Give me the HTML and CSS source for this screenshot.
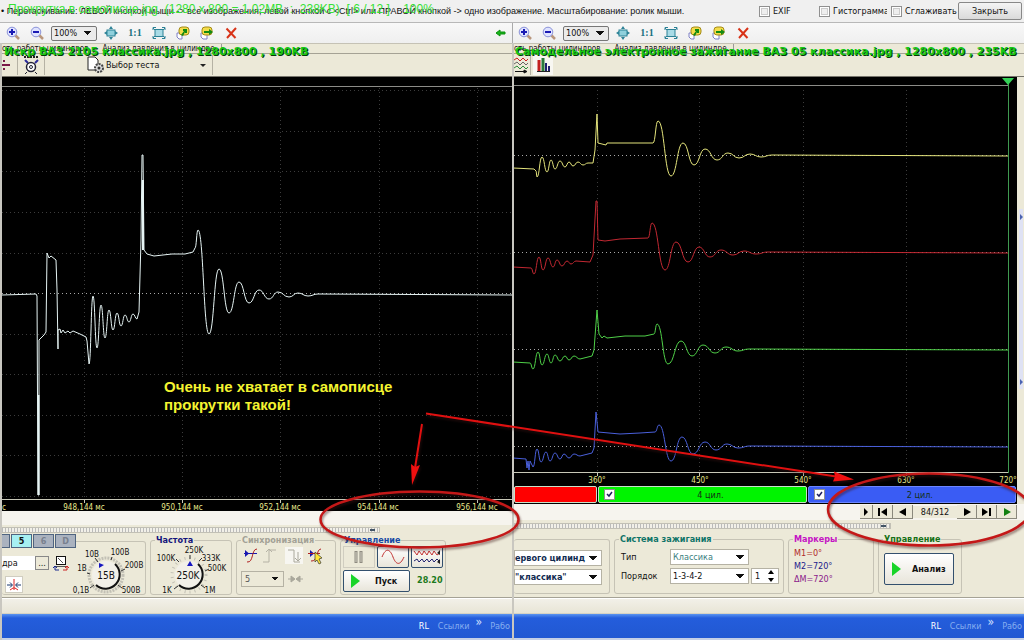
FILE: index.html
```html
<!DOCTYPE html>
<html lang="ru">
<head>
<meta charset="utf-8">
<title>Сравнение изображений</title>
<link rel="stylesheet" href="styles.css">
</head>
<body>
<svg class="defs" width="0" height="0" aria-hidden="true">
  <symbol id="zin" viewBox="0 0 14 14"><path d="M8.5 8.5L13 13" stroke="#b9967c" stroke-width="2.5"/><circle cx="6" cy="6" r="4.8" fill="#dfe3ff" stroke="#8a92d8"/><path d="M3 6h6M6 3v6" stroke="#1a1ab4" stroke-width="2"/></symbol>
  <symbol id="zout" viewBox="0 0 14 14"><path d="M8.5 8.5L13 13" stroke="#b9967c" stroke-width="2.5"/><circle cx="6" cy="6" r="4.8" fill="#dfe3ff" stroke="#8a92d8"/><path d="M3 6h6" stroke="#1a1ab4" stroke-width="2"/></symbol>
  <symbol id="fit" viewBox="0 0 14 14"><rect x="3" y="4" width="8" height="6" fill="#8fd0dc" stroke="#2d8296"/><path d="M7 0l2 3H5zM7 14l2-3H5zM0 7l3-2v4zM14 7l-3-2v4z" fill="#2d8296"/></symbol>
  <symbol id="full" viewBox="0 0 14 14"><rect x="3" y="3.5" width="8" height="7" fill="#a9dbe6" stroke="#2d8296"/><path d="M1 4V1.500h3M10 1.500h3V4M1 10v2.500h3M10 12.500h3V10M1 2l2 2M13 2l-2 2M1 12l2-2M13 12l-2-2" fill="none" stroke="#2d8296"/></symbol>
  <symbol id="copy" viewBox="0 0 14 14"><path d="M1 7h5v6H3l-2-2z" fill="#fff" stroke="#7f80c4"/><rect x="3" y="1" width="10" height="8" rx="3" fill="#f4dc4a" stroke="#a48b18"/><path d="M5 9l3-4H7V3h4v4H9V6L7 10z" fill="#128a12"/></symbol>
  <symbol id="move" viewBox="0 0 14 14"><path d="M1 7h6v6H3l-2-2z" fill="#fff" stroke="#7f80c4"/><rect x="2" y="1" width="10" height="8" rx="3" fill="#f4dc4a" stroke="#a48b18"/><path d="M4 5h5V3l4 3-4 3V7H4z" fill="#128a12"/></symbol>
  <symbol id="del" viewBox="0 0 14 14"><path d="M2.500 2.500l9 9.500M12 2L3 12" stroke="#d83318" stroke-width="2" fill="none"/></symbol>
  <symbol id="back" viewBox="0 0 14 14"><path d="M3 7l4-3v2h5v2H7v2z" fill="#19b41c" stroke="#0a900d"/></symbol>
</svg>

<header class="topbar">
  <p class="hint">• Перетаскивание: ЛЕВОЙ кнопкой мыши -&gt; все изображения; левой кнопкой с &lt;Ctrl&gt; или ПРАВОЙ кнопкой -&gt; одно изображение. Масштабирование: ролик мыши.</p>
  <label class="opt exif"><input type="checkbox">EXIF</label>
  <label class="opt hist"><input type="checkbox"><span>Гистограмма</span></label>
  <label class="opt smooth"><input type="checkbox">Сглаживать</label>
  <button class="close" type="button">Закрыть</button>
  <p class="ghost">Прокрутка в самописце.jpg  (1280 x 800 = 1.02MB  :  238KB)  [ 6 / 12 ]    100%</p>
</header>

<main class="panes">
  <section class="pane">
    <div class="tools">
      <button type="button" aria-label="Увеличить"><svg><use href="#zin"/></svg></button>
      <button type="button" aria-label="Уменьшить"><svg><use href="#zout"/></svg></button>
      <select class="scale" aria-label="Масштаб"><option>100%</option></select>
      <button type="button" aria-label="Вписать"><svg><use href="#fit"/></svg></button>
      <button type="button" class="one">1:1</button>
      <button type="button" aria-label="Во весь экран"><svg><use href="#full"/></svg></button>
      <button type="button" aria-label="Копировать"><svg><use href="#copy"/></svg></button>
      <button type="button" aria-label="Переместить"><svg><use href="#move"/></svg></button>
      <button type="button" aria-label="Удалить"><svg><use href="#del"/></svg></button>
      <button type="button" class="last" aria-label="Назад"><svg><use href="#back"/></svg></button>
    </div>
    <div class="view">
      <div class="tabs"><span>сть работы цилиндров</span><span>Анализ давления в цилиндре</span></div>
      <div class="bar">
        <svg class="tick" width="10" height="18"><path d="M0 9h8M2 4v2M2 12v2" stroke="#7a1848" stroke-width="2"/></svg>
        <i class="sep"></i>
        <svg width="26" height="20"><path d="M6 2h14" stroke="#222" stroke-width="2" stroke-dasharray="2 1"/><path d="M7 5l3 3M20 5l-3 3" stroke="#2b2b9a" stroke-width="2"/><circle cx="13" cy="12" r="4.500" fill="#fff" stroke="#223" stroke-width="1.500"/><circle cx="13" cy="12" r="1.500" fill="none" stroke="#223"/><path d="M9 17l-2 2M17 17l2 2" stroke="#223"/></svg>
        <i class="sep"></i>
        <button type="button" class="test"><svg width="19" height="18"><path d="M1 1h7l3 3v10H1z" fill="#fff" stroke="#222"/><circle cx="12" cy="12" r="4" fill="#ddd" stroke="#444" stroke-width="2" stroke-dasharray="2 1"/><circle cx="12" cy="12" r="1.500" fill="#333"/></svg>Выбор теста<b class="dn"></b></button>
        <i class="sep"></i>
      </div>
      <svg class="scope scope-l">
        <g transform="translate(-2,-77)">
          <path d="M0 86.500H1024" stroke="#8c8c88"/>
          <path class="grid" d="M2 90.500H512M2 131.500H512M2 171.500H512M2 212.500H512M2 253.500H512M2 334.500H512M2 374.500H512M2 415.500H512M2 455.500H512M2 496.500H512M84.500 88V499M182.500 88V499M280.500 88V499M379.500 88V499M477.500 88V499"/>
          <path class="grid hot" d="M2 293.500H512"/>
          <path d="M0 499.500H1024M84.500 499v4M182.500 499v4M280.500 499v4M379.500 499v4M477.500 499v4" stroke="#c8c8b8"/>
          <path class="wave" data-wave="white" stroke="#e6f4f4"/>
          <path d="M38.500 395V495M143 180V250" stroke="#e6f4f4" stroke-width="2"/>
          <g class="axis"><text x="4">с</text><text x="84">948,144 мс</text><text x="182">950,144 мс</text><text x="280">952,144 мс</text><text x="378">954,144 мс</text><text x="477">956,144 мс</text></g>
        </g>
      </svg>
      <div class="strip"></div>
      <div class="split split-l"><b></b></div>
      <div class="panel">
        <fieldset class="g-volt">
          <legend class="chan"><button type="button"></button><button type="button" class="on">5</button><button type="button">6</button><button type="button">D</button></legend>
          <div class="voltcol">
            <div class="row"><input type="text" class="name" value="дра" aria-label="Имя"><button type="button" class="dots">...</button><svg width="16" height="16"><rect x="3.500" y="1.500" width="9" height="8" fill="#fff" stroke="#111"/><path d="M5 3l5 5M3 11.500h10" stroke="#555"/><path d="M6 15H2v-3M0 13l2-2 2 2" fill="none" stroke="#1a2a90"/><path d="M10 15h4v-3M12 13l2-2 2 2" fill="none" stroke="#c22"/></svg></div>
            <button type="button" class="center" aria-label="Центр"><svg width="16" height="14"><path d="M1 7h5M4 4.500L6.500 7 4 9.500M15 7h-5M12 4.500L9.500 7l2.500 2.500" fill="none" stroke="#15356b"/><path d="M8 1v11M4 12l3-2h2l3 2" stroke="#d22" fill="none"/></svg></button>
          </div>
          <svg class="dial" width="75" height="50"><g transform="translate(-70,-546)">
            <circle cx="106" cy="575" r="17" fill="none" stroke="#c2c0b5" stroke-width="3" stroke-dasharray="2 1"/><circle cx="106" cy="575" r="14" fill="#f2f0e8"/><path d="M96 585A14 14 0 1 0 115 564" fill="none" stroke="#111" stroke-width="2"/><path d="M94 585l-4 3M90 574l-3-1M98 562l-3-4M111 560l1-3M121 571l4-2M118 585l4 3" stroke="#333"/><path d="M99 563l5 2-5 3z" fill="#1616c0"/>
            <text x="106" y="579" class="big">15В</text><text x="92" y="557">10В</text><text x="120" y="555">100В</text><text x="82" y="571">1В</text><text x="134" y="568">200В</text><text x="81" y="593">0,1В</text><text x="131" y="593">500В</text>
          </g></svg>
        </fieldset>
        <fieldset class="g-freq">
          <legend class="navy">Частота</legend>
          <svg class="dial" width="80" height="50"><g transform="translate(-151,-546)">
            <circle cx="189" cy="575" r="17" fill="none" stroke="#c2c0b5" stroke-width="3" stroke-dasharray="1 4"/><circle cx="189" cy="575" r="14" fill="#f2f0e8"/><path d="M179 585A14 14 0 1 0 198 564" fill="none" stroke="#111" stroke-width="2"/><path d="M178 586l-4 3M179 562l-3-3M190 559v-4M199 561l3-3M205 571l4-2M201 585l4 3" stroke="#333"/><path d="M190 561l3 5h-6z" fill="#1616c0"/>
            <text x="188" y="579" class="big">250K</text><text x="194" y="553">250K</text><text x="166" y="561">100K</text><text x="211" y="561">333K</text><text x="217" y="571">500K</text><text x="167" y="593">1K</text><text x="210" y="593">1M</text>
          </g></svg>
        </fieldset>
        <fieldset class="g-sync">
          <legend class="dim">Синхронизация</legend>
          <svg width="88" height="20"><path d="M4 4v7l4-3.500z" fill="#1616b0"/><path d="M3 7.500h13" stroke="#1616b0"/><path d="M6 16c7 1 4-13 10-13" fill="none" stroke="#b02020"/><path d="M28 16v-13M25 6l3-3 3 3M22 16h6M28 4h7" fill="none" stroke="#b5b2a5"/><rect x="44" y="1" width="18" height="17" fill="#f7f6f1"/><path d="M47 4h6v12h6M57 6v9M54 12l3 3 3-3" fill="none" stroke="#aaa89c"/><path d="M69 4v7l4-3.500z" fill="#1616b0"/><path d="M67 7.500h12M70 15c7 1 5-12 10-12" fill="none" stroke="#b02020"/><path d="M74 6l7 6-3 1 2 4-2 1-2-4-2 2z" fill="#ffe838" stroke="#333" stroke-width=".7"/></svg>
          <div class="row"><select class="sel five" aria-label="Уровень"><option>5</option></select><svg width="16" height="10"><path d="M0 5h6M15 5H9M3 2l4 3-4 3zM12 2L8 5l4 3z" fill="#aaa89c" stroke="#aaa89c"/></svg></div>
        </fieldset>
        <fieldset class="g-ctl">
          <legend class="blue">Управление</legend>
          <div class="row trio">
            <button type="button" class="flat" aria-label="Пауза"><svg width="12" height="14"><path d="M3 1v12M8 1v12" stroke="#8e8b80" stroke-width="3"/><path d="M3 2v10M8 2v10" stroke="#d4d1c4"/></svg></button>
            <button type="button" class="xp" aria-label="Осциллограф"><svg width="26" height="18"><path d="M2 9C6-1 10 1 13 9s7 9 11 0" fill="none" stroke="#c22f2f"/></svg></button>
            <button type="button" class="xp" aria-label="Самописец"><svg width="28" height="18"><path d="M1 3l3 4 2-4 3 4 2-4 3 4 2-4 3 4 2-4 3 4 3-2" fill="none" stroke="#c22f2f"/><path d="M1 13l3-2 2 3 3-3 2 3 3-3 2 3 3-3 2 3 3-3 3 3" fill="none" stroke="#20206e"/><path d="M27 2v5l-3-2zM27 11v5l-3-2z" fill="#222"/></svg></button>
          </div>
          <div class="row"><button type="button" class="xp go"><i class="play"></i>Пуск</button><span class="count">28.20</span></div>
        </fieldset>
      </div>
      <div class="status"></div>
      <div class="task"><b>RL</b><span>Ссылки</span><sup>»</sup><span>Рабо</span></div>
    </div>
    <p class="caption">Искр ВАЗ 2105 классика.jpg , 1280x800 , 190KB</p>
    <p class="note">Очень не хватает в самописце<br>прокрутки такой!</p>
  </section>

  <section class="pane">
    <div class="tools">
      <button type="button" aria-label="Увеличить"><svg><use href="#zin"/></svg></button>
      <button type="button" aria-label="Уменьшить"><svg><use href="#zout"/></svg></button>
      <select class="scale" aria-label="Масштаб"><option>100%</option></select>
      <button type="button" aria-label="Вписать"><svg><use href="#fit"/></svg></button>
      <button type="button" class="one">1:1</button>
      <button type="button" aria-label="Во весь экран"><svg><use href="#full"/></svg></button>
      <button type="button" aria-label="Копировать"><svg><use href="#copy"/></svg></button>
      <button type="button" aria-label="Переместить"><svg><use href="#move"/></svg></button>
      <button type="button" aria-label="Удалить"><svg><use href="#del"/></svg></button>
    </div>
    <div class="view">
      <div class="tabs"><span>сть работы цилиндров</span><span>Анализ давления в цилиндре</span></div>
      <div class="bar">
        <svg width="16" height="18"><path d="M0 4l3-2 3 3 3-3 3 3 2-2" fill="none" stroke="#c22"/><path d="M0 8l3-2 3 3 3-3 3 3 2-2" fill="none" stroke="#666"/><path d="M0 12l3-2 3 3 3-3 3 3 2-2" fill="none" stroke="#2a8a3a"/><path d="M1 15.500h9M10 14l3 1.500-3 1.500z" stroke="#111" fill="#111"/></svg>
        <i class="sep"></i>
        <svg class="chart" width="20" height="20"><path d="M6 5v11" stroke="#c22020" stroke-width="3"/><path d="M10 3v13" stroke="#2a7a3a" stroke-width="3"/><path d="M13 8v8M16 11v5" stroke="#20206e" stroke-width="2"/><path d="M4 16.500h13" stroke="#222"/></svg>
      </div>
      <div class="plot">
        <svg class="scope scope-r">
          <g transform="translate(-514,-77)">
            <path d="M0 85.500H1009" stroke="#8c8c88"/>
            <path class="grid" d="M597.500 90V472M699.500 90V472M803.500 90V472M906.500 90V472"/>
            <path class="grid hot" d="M514 155.500H1008M514 252.500H1008M514 349.500H1008M514 446.500H1008"/>
            <path d="M0 472.500H1009M597.500 472v4M699.500 472v4M803.500 472v4M906.500 472v4" stroke="#c8c8b8"/>
            <path d="M1008.500 84V473" stroke="#3f9a50"/><path d="M1002 78h12l-6 7z" fill="#35d258"/>
            <path class="wave" data-wave="yellow" stroke="#e4e47c"/>
            <path class="wave" data-wave="red" stroke="#c22832"/>
            <path class="wave" data-wave="green" stroke="#4fd048"/>
            <path class="wave" data-wave="blue" stroke="#4a60dc"/>
            <g class="axis deg"><text x="597">360°</text><text x="700">450°</text><text x="803">540°</text><text x="906">630°</text><text x="1008">720°</text></g>
          </g>
        </svg>
        <div class="cyl">
          <div class="c1"></div>
          <div class="c4"><input type="checkbox" id="c4" checked><label for="c4">4 цил.</label></div>
          <div class="c2"><input type="checkbox" id="c2" checked><label for="c2">2 цил.</label></div>
        </div>
      </div>
      <div class="nav">
        <button type="button" class="thin" aria-label="Шаг"><svg><path d="M4 2v8l4-4z"/></svg></button>
        <button type="button" aria-label="Начало"><svg><path d="M1 2h2v8H1zM10 2v8L4 6z"/></svg></button>
        <button type="button" aria-label="Предыдущий"><svg><path d="M9 2v8L2 6z"/></svg></button>
        <output>84/312</output>
        <button type="button" aria-label="Следующий"><svg><path d="M3 2v8l7-4z"/></svg></button>
        <button type="button" aria-label="Конец"><svg><path d="M1 2v8l6-4zM8 2h2v8H8z"/></svg></button>
        <button type="button" aria-label="Пуск"><svg class="gr"><path d="M3 2v8l7-4z"/></svg></button>
      </div>
      <div class="split split-r"><b></b></div>
      <div class="panel panel-r">
        <fieldset class="g-first">
          <select class="sel bold" aria-label="Синхронизация"><option>ервого цилинд</option></select>
          <select class="sel bold" aria-label="Система"><option>"классика"</option></select>
        </fieldset>
        <fieldset class="g-ign">
          <legend class="teal">Система зажигания</legend>
          <div class="row"><label for="type">Тип</label><select id="type" class="sel tealt"><option>Классика</option></select></div>
          <div class="row"><label for="order">Порядок</label><select id="order" class="sel"><option>1-3-4-2</option></select><span class="spin"><input type="text" value="1" aria-label="Номер"><svg width="10" height="14"><path d="M5 1l3 4H2zM5 13l3-4H2z"/></svg></span></div>
        </fieldset>
        <fieldset class="g-mark">
          <legend class="mag">Маркеры</legend>
          <p class="m1">М1=0°</p><p class="m2">М2=720°</p><p class="m3">ΔМ=720°</p>
        </fieldset>
        <fieldset class="g-an">
          <legend class="grn">Управление</legend>
          <button type="button" class="xp analyze"><i class="play"></i>Анализ</button>
        </fieldset>
      </div>
      <div class="status"></div>
      <div class="task"><b>RL</b><span>Ссылки</span><sup>»</sup><span>Рабо</span></div>
    </div>
    <p class="caption">Самодельное электронное зажигание ВАЗ 05 классика.jpg , 1280x800 , 235KB</p>
    <svg class="edge" width="6" height="180"><path d="M1 0h4v180H1z" fill="#dfe2f4"/><path d="M2 5l3 3-3 3zM2 170l3 3-3 3z" fill="#4a62b0"/></svg>
  </section>
</main>

<svg class="marks" aria-hidden="true">
  <g fill="none" stroke="#c41818" stroke-width="2.500"><ellipse cx="419.500" cy="519.500" rx="99" ry="28"/><ellipse cx="929" cy="509.500" rx="101" ry="36"/></g>
  <g stroke="#e01010" stroke-width="2"><path d="M422 424L415 468M426 413.500L836 476.500"/></g>
  <path d="M412 485l-1-21 4 3 5-2zM854 479.500l-21 2 2-5-1-5z" fill="#f01010"/>
</svg>
<script src="waves.js"></script>
</body>
</html>
```

FILE: styles.css
```css
* { box-sizing: border-box; }
body { margin: 0; min-height: 100vh; display: flex; flex-direction: column; position: relative; overflow: hidden; background: #f0f0f0; font: 9px/12px "DejaVu Sans Condensed", "DejaVu Sans", sans-serif; color: #111; }
p { margin: 0; }
button, input, select { font: inherit; color: inherit; margin: 0; padding: 0; }
button { border: 0; background: none; }
svg { display: block; flex: none; }
.defs { position: absolute; }

.topbar { position: relative; height: 23px; display: flex; align-items: center; padding: 0 2px 0 1px; border-bottom: 1px solid #b8b8b8; white-space: nowrap; }
.hint { flex: 1 1 0; min-width: 0; font: 9px/12px "Liberation Sans", sans-serif; }
.opt { display: flex; align-items: center; gap: 3px; margin-right: 4px; }
.opt.exif { width: 56px; }
.opt.hist { width: 68px; }
.opt.smooth { width: 63px; }
.opt.hist span { overflow: hidden; }
.opt input, .cyl input { appearance: none; flex: none; width: 11px; height: 11px; border: 1px solid #909090; background: #eee; box-shadow: inset 0 0 0 1px #fff, inset 0 0 0 2px #ccc; }
.close { width: 64px; height: 18px; border: 1px solid #888; border-radius: 2px; background: linear-gradient(#f4f4f4, #dadada); }
.ghost { position: absolute; left: 8px; top: 2px; white-space: pre; font: 12px/14px "Liberation Sans", sans-serif; color: #35e035; }

.panes { flex: 1; display: grid; grid-template-columns: 1fr 1fr; }
.pane { position: relative; min-width: 0; display: flex; flex-direction: column; overflow: hidden; }
.tools { height: 20px; display: flex; align-items: center; padding-left: 1px; background: linear-gradient(#f8f8f8, #efefef); }
.pane + .pane .tools { padding-left: 0; border-left: 1px solid #aaa; }
.tools button { width: 24px; height: 18px; display: grid; place-items: center; }
.tools svg { width: 14px; height: 14px; }
.tools .one { font: bold 10px/12px "Liberation Serif", serif; color: #17707e; }
.tools .last { margin-left: auto; }
select { appearance: none; border: 1px solid #999; border-radius: 0; }
.sel, .scale { background: linear-gradient(45deg, transparent 50%, #111 0) right 8px center / 4px 4px no-repeat, linear-gradient(-45deg, transparent 50%, #111 0) right 4px center / 4px 4px no-repeat, #fff; }
.scale { width: 46px; height: 15px; margin: 0 2px; padding-left: 2px; border-color: #777; border-radius: 2px; background-color: #ebebeb; }

.view { flex: 1; display: flex; flex-direction: column; border-left: 2px solid #c9c7c0; background: #ece9d8; overflow: hidden; }
.tabs { height: 11px; display: flex; align-items: center; gap: 14px; border-bottom: 1px solid #a5a295; border-top: 1px solid #c5c2b5; overflow: hidden; white-space: nowrap; font-size: 8px; }
.tabs span + span { border-right: 1px solid #999; padding-right: 6px; }
.bar { height: 23px; display: flex; align-items: center; border-bottom: 1px solid #77756c; }
.tick { margin-right: 5px; }
.sep { width: 1px; height: 20px; background: #b5b2a4; }
.test { display: flex; align-items: center; width: 125px; margin-left: 42px; white-space: nowrap; }
.dn { margin-left: auto; margin-right: 6px; border: 3px solid transparent; border-top-color: #222; border-bottom: 0; }
.chart { margin-left: 2px; background: #f8f7f2; }

.scope { width: 100%; background: #000; overflow: hidden; }
.scope-l { height: 434px; }
.scope-r { height: 408px; }
.grid { fill: none; stroke: #3c3c3c; stroke-dasharray: 1 3; }
.grid.hot { stroke: #a8a8a8; }
.wave { fill: none; stroke-width: 1px; stroke-linejoin: round; }
.axis text { font: 8px "DejaVu Sans Condensed", sans-serif; fill: #e8e88c; text-anchor: middle; transform: translateY(510px); }
.axis.deg text { transform: translateY(483px); }
.strip { height: 14px; background: #f6f4ee; }
.split { display: flex; align-items: center; }
.split b { height: 6px; border: 1px solid #c2c0b5; border-left: 0; background: linear-gradient(#456, #456) right 4px center / 5px 2px no-repeat, repeating-linear-gradient(90deg, #bbb 0 1px, #f2f0e8 1px 3px); }
.split-l { height: 9px; }
.split-l b { width: 378px; }
.split-r { height: 11px; }
.split-r b { width: 377px; }

.panel { height: 64px; display: flex; align-items: flex-start; gap: 4px; border-bottom: 1px solid #a5a295; }
.panel-r { height: 67px; padding-top: 2px; }
fieldset { margin: 0; min-width: 0; height: 61px; padding: 0 4px; border: 1px solid #c6c3b5; border-radius: 3px; flex: none; white-space: nowrap; }
legend { padding: 0 1px; height: 12px; font-weight: bold; }
.navy { color: #14147c; }
.dim { color: #a3a196; }
.blue { color: #1648a4; }
.teal { color: #0f7468; }
.mag { color: #c414c4; }
.grn { color: #167016; }
.row { display: flex; align-items: center; }
.g-volt { width: 144px; display: flex; padding: 0; border-left: 0; }
.chan { display: flex; gap: 1px; height: 14px; padding: 0; }
.chan button { width: 21px; height: 14px; border: 1px solid #4f6480; background: #aab2bf; color: #78808e; }
.chan button:first-child { width: 8px; border-left: 0; }
.chan .on { background: #a6f0f2; color: #111; }
.voltcol { width: 68px; padding-top: 7px; }
.name { width: 33px; height: 14px; border: 0; background: #fff; }
.dots { width: 14px; height: 14px; border: 1px solid #888; background: #ece9d8; line-height: 6px; margin-right: 4px; }
.center { margin: 5px 0 0 3px; width: 18px; height: 17px; background: #fff; display: grid; place-items: center; border: 1px solid #d0cdc0; }
.dial text { font: 8px "DejaVu Sans Condensed", sans-serif; text-anchor: middle; fill: #111; }
.dial .big { font-size: 10px; }
.g-volt .dial { margin-top: -2px; }
.g-freq { width: 82px; padding: 0; }
.g-freq legend { margin-left: 4px; }
.g-sync { width: 100px; }
.g-sync .row { gap: 4px; margin-top: 5px; }
.sel { height: 16px; padding-left: 2px; border-color: #b5b2a4; }
.five { width: 43px; background-color: #ece9d8; color: #555; padding-left: 3px; }
.g-ctl { width: 106px; padding: 0 2px; }
.trio { gap: 2px; }
.xp { border: 1px solid #33506e; border-radius: 2px; background: linear-gradient(#fff, #e8e5da); }
.trio button { width: 32px; height: 22px; display: grid; place-items: center; }
.flat { border: 1px solid #d0cdc0; }
.go { width: 67px; height: 22px; margin-top: 2px; display: flex; align-items: center; gap: 15px; padding-left: 7px; font-weight: bold; }
.play { border: 7px solid transparent; border-left: 9px solid #18d428; border-right: 0; }
.count { margin-left: 7px; font-weight: bold; color: #1d7a1d; }
.status { height: 16px; border-top: 1px solid #fff; border-bottom: 1px solid #d5d2c5; background: linear-gradient(#f2f0e8, #e8e5d6); }
.task { flex: 1; min-height: 24px; display: flex; align-items: center; justify-content: flex-end; overflow: hidden; background: linear-gradient(#5a94f0, #245ddc 4px, #2158d2); border-bottom: 2px solid #c5d0e6; color: #86aef0; white-space: nowrap; padding-right: 2px; }
.task b { width: 19px; font-weight: normal; color: #fff; }
.task span { margin-right: 6px; }
.task sup { margin-right: 8px; padding-bottom: 8px; font-size: 12px; line-height: 8px; color: #cfe0ff; }
.task span:last-child { margin-right: 0; }
.caption { position: absolute; left: 4px; top: 23px; white-space: nowrap; font: bold 11px/12px "DejaVu Sans", sans-serif; color: #16c816; text-shadow: 1px 1px 0 #063806; }
.pane + .pane .caption { left: 3px; }
.note { position: absolute; left: 164px; top: 355px; font: bold 15px/18px "Liberation Sans", sans-serif; color: #f4f430; }

.plot { margin-right: 7px; background: #000; }
.cyl { display: grid; grid-template-columns: 83fr 208fr 208fr; gap: 1px; height: 19px; padding: 1px 1px 1px 0; }
.cyl div { display: flex; align-items: center; min-width: 0; border: 1px solid #c8e0c8; padding-left: 5px; border-radius: 2px; }
.cyl label { flex: 1; text-align: center; color: #153015; }
.cyl .c1 { background: #f00; }
.cyl .c4 { background: #00f400; }
.cyl .c2 { background: #3a5cf4; border-color: #6c86ff; }
.cyl input { background: #fff url("data:image/svg+xml,%3Csvg xmlns='http://www.w3.org/2000/svg' viewBox='0 0 9 9'%3E%3Cpath d='M2 4l2 2 3-4' fill='none' stroke='%23202060' stroke-width='1.500'/%3E%3C/svg%3E"); box-shadow: none; }
.nav { height: 16px; display: flex; align-items: center; justify-content: flex-end; padding-right: 7px; background: #f6f4ee; }
.nav button { width: 20px; height: 14px; display: grid; place-items: center; border-right: 1px solid #8a887c; border-bottom: 1px solid #8a887c; background: #ece9d8; }
.nav .thin { width: 13px; }
.nav svg { width: 12px; height: 12px; }
.nav .gr { fill: #128012; }
.nav output { width: 44px; text-align: center; background: #ece9d8; }
.g-first { width: 96px; display: flex; flex-direction: column; gap: 3px; padding: 10px 8px 0 0; border-left: 0; }
.panel-r .g-first { height: 55px; margin-top: 6px; }
.bold { font-weight: bold; color: #102a50; width: 88px; padding-left: 0; }
.g-ign { width: 170px; }
.g-ign .row { height: 16px; margin-top: 3px; }
.g-ign legend + .row { margin-top: 4px; }
.g-ign label { width: 51px; padding-left: 2px; }
.g-ign .sel { width: 79px; }
.g-ign .sel.tealt { color: #3a8080; }
.spin { display: flex; align-items: center; width: 28px; height: 16px; margin-left: 2px; background: #fff; border: 1px solid #b5b2a4; }
.spin input { width: 14px; border: 0; padding-left: 3px; background: none; }
.g-mark { width: 86px; }
.g-mark legend + p { margin-top: 2px; }
.g-mark p { line-height: 13px; padding-left: 1px; }
.m1 { color: #b02a2a; }
.m2 { color: #20208c; }
.m3 { color: #8a208a; }
.g-an { width: 84px; }
.analyze { width: 70px; height: 32px; margin: 8px 0 0 1px; display: flex; align-items: center; gap: 11px; padding-left: 7px; font-weight: bold; }
.edge { position: absolute; right: 0; top: 186px; }
.marks { position: absolute; left: 0; top: 0; width: 100%; height: 100%; pointer-events: none; filter: drop-shadow(1px 2px 1px rgba(60, 20, 20, .5)); }
```

FILE: waves.js
```js
// Each trace is a list of runs: "L" joins points with straight lines,
// "S" joins successive peaks and troughs with smooth half-waves.
const waves = {
  white: [
    ["L", 2,295, 36,294, 37,296, 38,495, 39,495, 39,340, 41,338, 44,335, 46,332, 47,253, 49,258, 51,256, 56,260, 57,290, 58,349, 58,330, 60,329, 61,333, 63,330, 65,333, 68,331, 70,333, 73,331, 80,334, 86,337, 87,341, 89,364],
    ["S", 93,296, 97,348, 101,305, 105,338, 109,310, 113,330, 117,313, 121,326, 125,315, 129,322, 133,314, 137,319],
    ["L", 139,312, 141,240, 142,155, 143,155, 144,250, 147,254, 154,256, 172,254, 185,254, 193,252, 195,248],
    ["S", 198,230, 209,334, 219,269, 229,313, 239,282, 249,303, 259,290, 269,299, 278,292, 289,297, 298,293, 308,296, 318,294],
    ["L", 512,295]
  ],
  yellow: [
    ["L", 513,168, 534,169, 536,171],
    ["S", 537,177, 542,157, 547,172, 551,160, 555,169, 560,161, 565,167, 569,162, 573,166, 578,162, 583,165, 588,163],
    ["L", 593,163, 595,150, 597,114, 598,143, 606,145, 607,143, 653,143],
    ["S", 658,121, 671,176, 683,143, 694,165, 705,149, 717,160, 728,153, 739,158, 750,154, 761,157, 772,155],
    ["L", 1008,156]
  ],
  red: [
    ["L", 513,267, 531,268],
    ["S", 534,274, 539,257, 543,270, 548,258, 553,267, 557,260, 562,266, 567,261, 571,264, 576,261],
    ["L", 590,262, 593,255, 596,201, 597,201, 598,240, 605,241, 620,239, 648,238],
    ["S", 652,223, 665,270, 676,242, 688,262, 699,247, 710,257, 721,250, 733,255, 744,251, 756,254, 768,252],
    ["L", 1008,253]
  ],
  green: [
    ["L", 513,362, 530,363],
    ["S", 533,369, 538,352, 542,365, 547,354, 551,363, 555,355, 560,361, 565,356, 569,360, 574,356, 580,359],
    ["L", 592,356, 594,350, 597,310, 599,334, 602,338, 604,336, 607,338, 625,336, 645,336, 654,334],
    ["S", 657,324, 668,364, 681,341, 692,356, 703,345, 715,353, 726,347, 738,351, 749,349],
    ["L", 1008,350]
  ],
  blue: [
    ["L", 513,458, 526,459, 527,468, 528,461, 529,470, 530,461, 533,467],
    ["S", 537,449, 541,462, 546,452, 550,461, 555,453, 560,459, 564,454, 569,458, 574,454, 580,456],
    ["L", 592,453, 594,448, 596,412, 598,432, 620,434, 640,433, 655,432],
    ["S", 659,425, 671,461, 682,437, 693,454, 705,442, 716,450, 727,444, 738,448, 750,446],
    ["L", 1008,447]
  ]
};

document.querySelectorAll("[data-wave]").forEach(path => {
  let d = "", px = 0;
  let py = 0;
  for (const [kind, ...pts] of waves[path.dataset.wave]) {
    for (let i = 0; i < pts.length; i += 2) {
      const x = pts[i], y = pts[i + 1], mx = (px + x) / 2;
      if (!d) d = `M${x} ${y}`;
      else if (kind === "L") d += `L${x} ${y}`;
      else d += `C${mx} ${py} ${mx} ${y} ${x} ${y}`;
      px = x;
      py = y;
    }
  }
  path.setAttribute("d", d);
});
```
